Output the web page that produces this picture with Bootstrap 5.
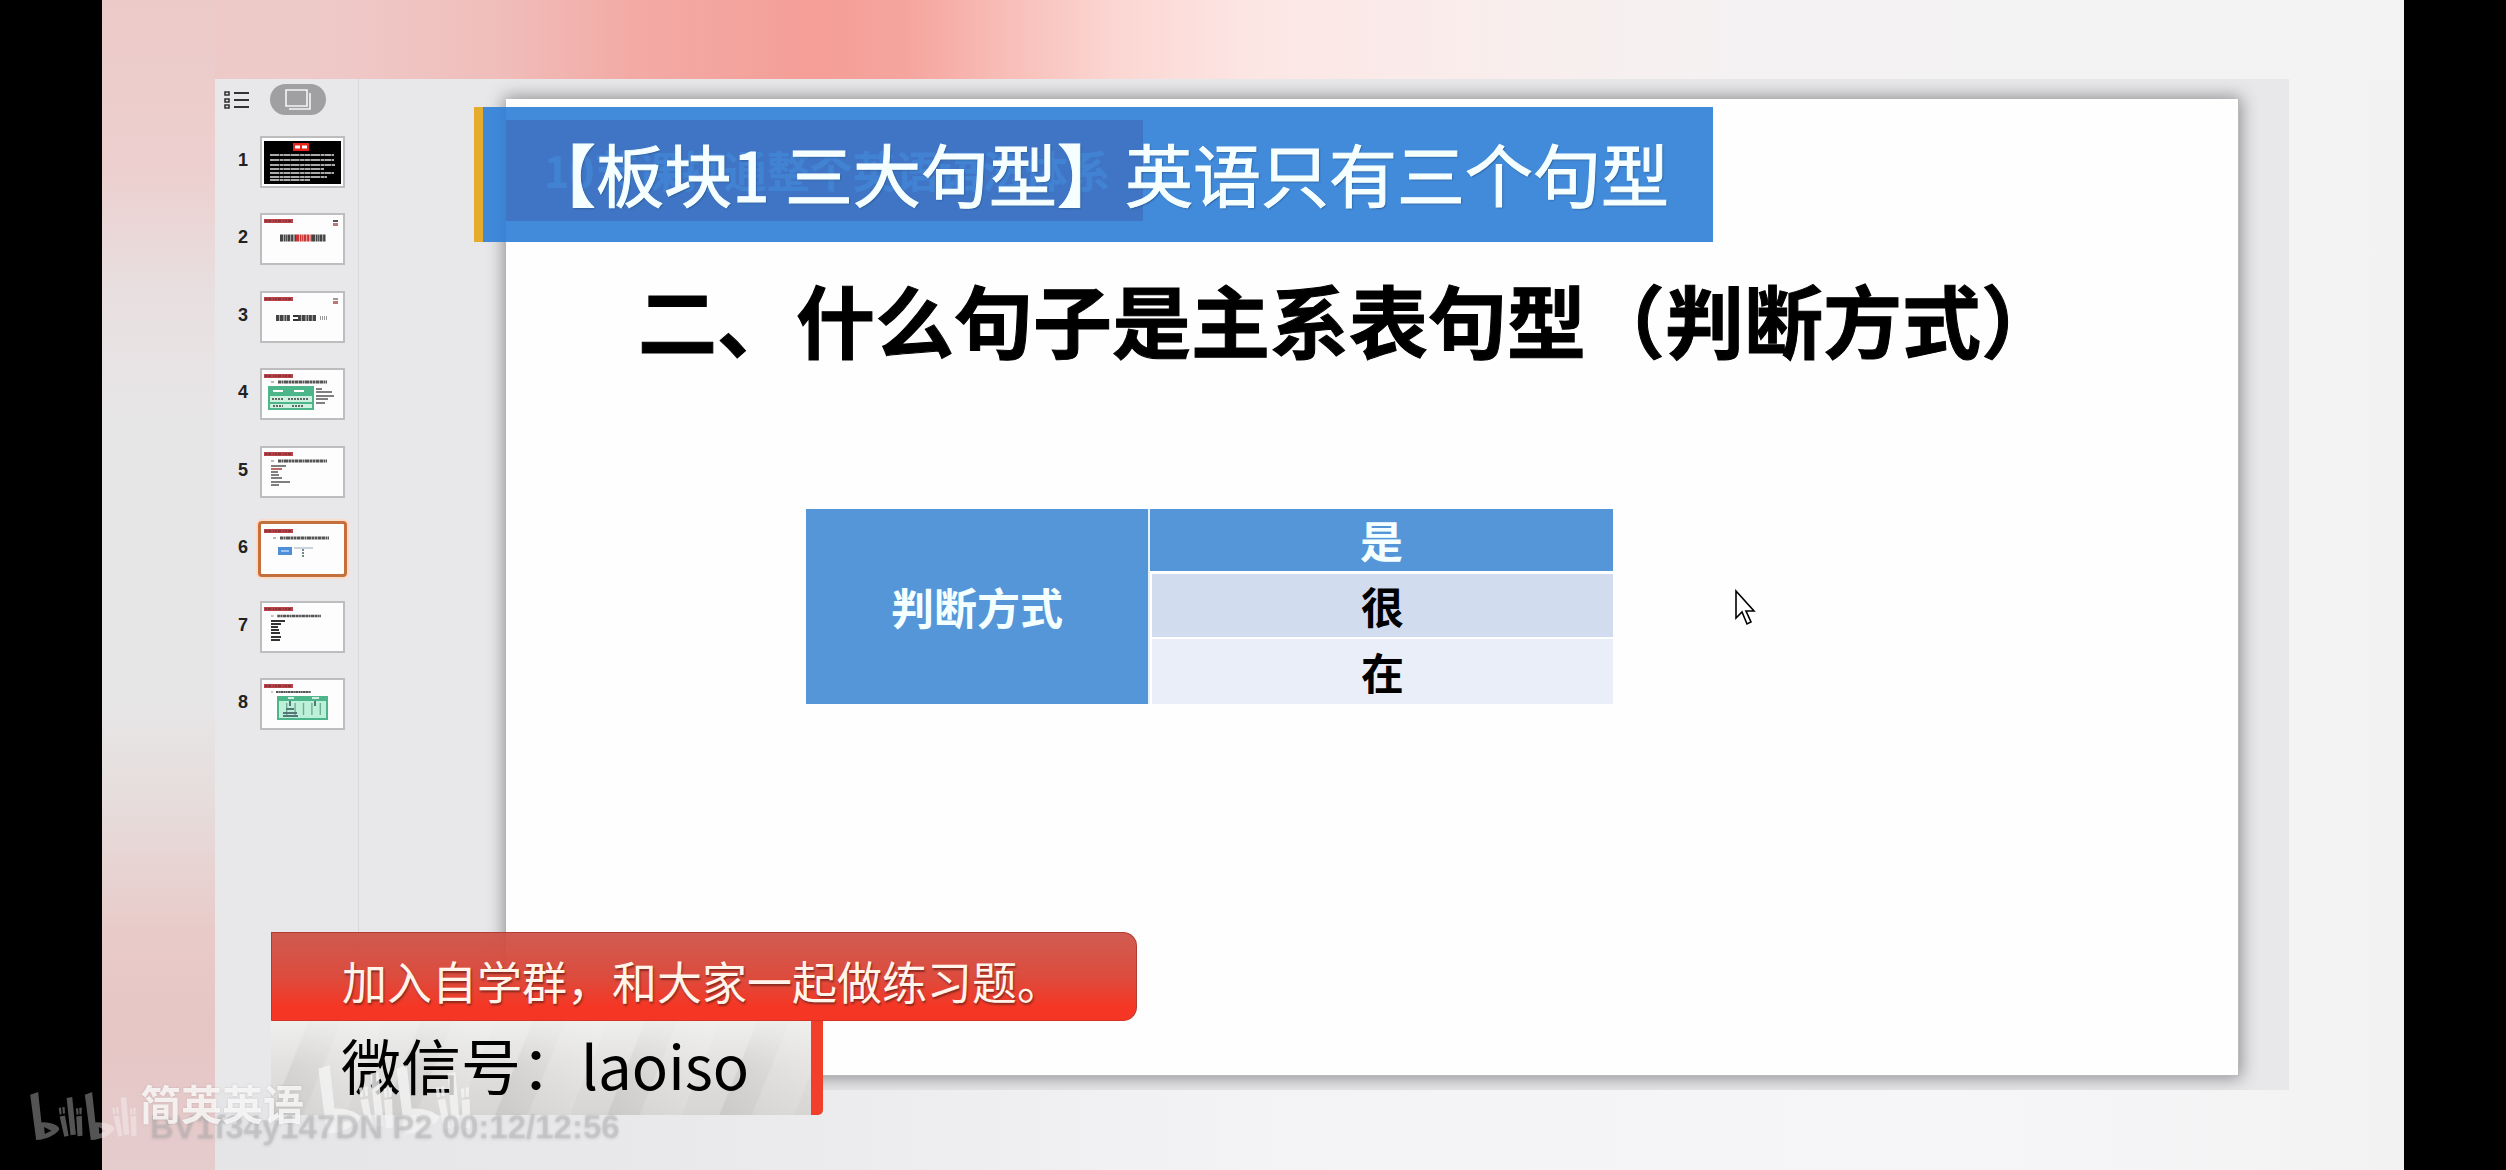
<!DOCTYPE html>
<html lang="zh-CN">
<head>
<meta charset="utf-8">
<meta name="viewport" content="width=device-width, initial-scale=1">
<title>英语只有三个句型</title>
<link rel="stylesheet" href="https://cdn.jsdelivr.net/npm/bootstrap@5.3.0/dist/css/bootstrap.min.css">
<style>
body{background:#000;font-family:"Noto Sans CJK SC","Noto Sans",sans-serif;color:#000}
.stage{margin:0 102px;min-height:100vh;padding:79px 115px 80px 113px;
 background:
 linear-gradient(180deg,#eccac8 0,#ecd0cf 15%,#e8dfe0 25%,#e7e6e7 36%,#e7e6e7 60%,#e6dcdb 69%,#e8cac8 80%,#e6c6c5 88%,#e5cccd 100%) left top/113px 100% no-repeat,
 linear-gradient(90deg,#eccac8 0,#eec9c8 10%,#f0bebb 17%,#f3aaa5 23%,#f49e97 31%,#f5a59e 35%,#f8bcb6 39%,#fbd6d2 44%,#fce6e4 50%,#f9edec 60%,#f4f2f3 72%,#f3f3f3 100%) left top/100% 79px no-repeat,
 linear-gradient(90deg,#e4e4e7 0,#e9e9eb 25%,#f3f3f5 50%,#f6f6f9 80%,#f2f2f2 100%)}
.editor{background:#e8e8ea}
.side{width:144px;border-right:1px solid #d9d9db;padding:5px 13px 0 8px}
.pill{width:56px;height:31px;border:0;border-radius:16px;background:#a09fa2;padding:0}
.plain{border:0;background:none;padding:0}
.tabs-row{gap:20px;margin-bottom:21px}
.thumbs{height:594px;margin:0}
.thumb{height:52px;border:0;background:none;padding:0;color:#222;font:bold 18px/48px "Liberation Sans",sans-serif}
.thumb span{height:52px}
.thumb svg{background:#fdfdfd;outline:2px solid #bdbcbe;outline-offset:-2px;width:85px;height:52px}
.thumb.now svg{outline:3px solid #c4703c;outline-offset:-1px;border-radius:2px;box-shadow:0 0 0 4px #fbdccb}
.canvas-area{padding:20px 50px 14px 147px;overflow:hidden}
.slide{background:#fefefe;box-shadow:0 0 16px 2px #8d8c90;border-right:1px solid #b9b9b9;border-bottom:1px solid #b9b9b9;padding-top:21px}
.strip{background:#e61e1e;color:rgba(255,255,255,.6);width:637px;height:101px;padding-left:38px;font-size:43px;line-height:99px;font-weight:700;white-space:nowrap}
.slide h1{font-size:79px;line-height:100px;font-weight:700;margin:48px 0 140px 132px;white-space:nowrap;-webkit-text-stroke:1px #000}
.judge{width:807px;margin-left:300px;font-size:43px;line-height:58px;font-weight:700;text-align:center;border-collapse:separate;border-spacing:0}
.judge th,.judge td{padding:0 0 2px;height:65px;vertical-align:middle}
.judge th{background:#5596d9;color:#f4ffff}
.judge .kind{width:344px;border-right:2px solid #e6f2fb}
.judge .first{border-bottom:3px solid #fff}
.judge .mid{background:#d2dcef;border-bottom:2px solid #fff;border-left:2px solid #fff}
.judge .low{background:#eaeef8;border-left:2px solid #fff}
.banner{left:372px;top:107px;height:135px;width:1239px;border-left:9px solid #e5ab2c;background:rgba(46,126,215,.9);color:#f6ffff;font-size:68px;line-height:132px;padding-left:45px;white-space:nowrap;text-shadow:1px 1px 2px #26588f;-webkit-text-stroke:1px #f6ffff}
.lower{left:169px;bottom:55px}
.invite{width:866px;height:89px;padding-left:70px;border-radius:0 14px 14px 0;border:1px solid #b23c31;border-bottom-color:#d53424;background:linear-gradient(180deg,rgba(205,78,66,.92),#dc4c3e 50%,#f63624 85%);color:#fff3ea;font-size:45px;line-height:95px;white-space:nowrap;text-shadow:1px 2px 2px #8a2a20}
.contact{width:552px;height:94px;padding-left:70px;border-right:12px solid #f23f2c;border-bottom-right-radius:5px;font-size:60px;line-height:86px;white-space:nowrap;
 background:linear-gradient(180deg,rgba(240,240,238,.9),rgba(220,219,218,.5) 50%,rgba(198,197,196,.5)),repeating-linear-gradient(112deg,#e6e5e4 0,#e6e5e4 34px,#cfcecc 36px,#d9d8d6 64px,#e6e5e4 66px,#efeeed 104px)}
.cursor{left:1632px;top:589px}
.mark-logo{left:30px;bottom:29px;fill:#fff;opacity:.33}
.mark-big{left:318px;bottom:35px;fill:#f4f4f4;opacity:.8}
.mark-name{left:140px;bottom:38px;font-size:41px;line-height:60px;font-weight:700;color:rgba(255,255,255,.82);text-shadow:0 0 2px rgba(120,110,110,.35)}
.mark-time{left:150px;bottom:23px;font:bold 33px/40px "Liberation Sans",sans-serif;color:rgba(170,170,173,.3);text-shadow:0 1px 3px rgba(140,140,140,.3);white-space:nowrap}
</style>
<script src="https://cdn.jsdelivr.net/npm/bootstrap@5.3.0/dist/js/bootstrap.bundle.min.js"></script>
</head>
<body>
<svg width="0" height="0" class="position-absolute" aria-hidden="true">
 <defs>
 <symbol id="bili" viewBox="0 0 322 148">
  <path fill-rule="evenodd" d="M0 8 24 0 34 92C56 90 88 100 88 112 84 126 46 146 18 145ZM42 106 44 127 64 117Z"/>
  <path d="M86 48l7-1 2 20-6 1zM97 46l7-1 1 20-6 1zM89 74l16-3 11 61-13 3zM110 18l17-3 11 113-16 3zM138 50l7-1 1 19-6 1zM148 48l8-1-1 20-6 1zM139 74l17-2 2 60-15 2z"/>
  <path fill-rule="evenodd" d="M165 8 187 0 197 92C220 90 254 100 255 112 250 126 212 146 183 145ZM207 106 209 127 229 117Z"/>
  <path d="M248 48l7-1 2 20-6 1zM259 46l7-1 1 20-6 1zM252 74l16-3 11 61-13 3zM273 18l17-3 9 113-16 3zM301 50l7-1 1 19-6 1zM311 48l8-1-1 20-6 1zM303 74l17-2 1 60-15 2z"/>
 </symbol>
 <symbol id="ribbon" viewBox="0 0 29 4"><path fill="#b94348" d="M0 0h29v4H0z"/><path stroke="#5c2528" stroke-dasharray="2 1 3 2 1 1" d="M1 2h27"/></symbol>
 <symbol id="heading" viewBox="0 0 56 4"><path stroke="#777" stroke-width="1" d="M0 2h3"/><path stroke="#555" stroke-width="3" stroke-dasharray="3 .5 2 .5 4 .5" d="M7 2h49"/></symbol>
 </defs>
</svg>

<main class="stage position-relative d-flex">
 <div class="editor d-flex flex-grow-1">
  <nav class="side flex-shrink-0" aria-label="幻灯片">
   <div class="tabs-row d-flex align-items-center">
    <button class="plain d-flex" aria-label="大纲"><svg width="27" height="20" fill="none" stroke="#333" stroke-width="2"><path d="M2 2h4v3H2zM2 9h4v3H2zM2 15h4v3H2z" stroke-width="1.6"/><path d="M11 3h15M11 10h15M11 17h15"/></svg></button>
    <button class="pill d-flex justify-content-center align-items-center" aria-label="缩略图"><svg width="28" height="26" viewBox="0 0 28 26" fill="none" stroke="#f5f5f5" stroke-width="1.6"><path d="M2 3h21v16H2zM26 6v16H5"/></svg></button>
   </div>
   <ol class="thumbs list-unstyled d-flex flex-column justify-content-between">
    <li><button class="thumb d-flex w-100 justify-content-end align-items-center gap-2"><span class="pe-1">1</span><svg viewBox="0 0 85 52"><path d="M4 5h77v43H4z"/><path fill="#e8231b" d="M33 7h16v8H33z"/><path stroke="#fff" stroke-width="3" stroke-dasharray="5 2" d="M35 11h12"/><g stroke="#aaa" stroke-width="2" stroke-dasharray="9 .6 4 .4 6 .5"><path d="M10 19h64M10 24h64M10 29h65M10 33h54M10 37h64M10 41h57M10 44h40" /></g></svg></button></li>
    <li><button class="thumb d-flex w-100 justify-content-end align-items-center gap-2"><span class="pe-1">2</span><svg viewBox="0 0 85 52"><use href="#ribbon" x="4" y="6" width="29" height="4"/><path fill="#555" d="M73 7h5v2h-5z"/><path fill="#b77" d="M73 10h5v3h-5z"/><g stroke-width="7" stroke-dasharray="3 .6 2 .5 1 .4"><path stroke="#444" d="M20 25h16M52 25h14"/><path stroke="#c33" d="M36 25h16"/></g></svg></button></li>
    <li><button class="thumb d-flex w-100 justify-content-end align-items-center gap-2"><span class="pe-1">3</span><svg viewBox="0 0 85 52"><use href="#ribbon" x="4" y="6" width="29" height="4"/><path fill="#999" d="M73 7h5v2h-5z"/><path fill="#b77" d="M73 10h5v3h-5z"/><path stroke="#444" stroke-width="6" stroke-dasharray="3 .6 4 .8 2 .5" d="M16 27h14M38 27h18"/><path stroke="#333" stroke-width="2" d="M33 25h5M33 29h5"/><path stroke="#999" stroke-width="4" stroke-dasharray="1 1" d="M60 27h8"/></svg></button></li>
    <li><button class="thumb d-flex w-100 justify-content-end align-items-center gap-2"><span class="pe-1">4</span><svg viewBox="0 0 85 52"><use href="#ribbon" x="4" y="6" width="29" height="4"/><use href="#heading" x="11" y="12" width="56" height="4"/><path fill="#4db58a" d="M8 18h46v24H8z"/><path fill="#cdf3e0" d="M10 28h42v6H10zM10 36h42v4H10z"/><path stroke="#fff" stroke-width="2" d="M13 23h10M34 23h10"/><path stroke="#666" stroke-width="2" stroke-dasharray="2 1" d="M12 31h12M28 31h20M13 38h10M32 38h12"/><path stroke="#555" stroke-width="1.4" d="M56 21h6M56 24h16M56 28h18M56 31h12M56 35h9"/></svg></button></li>
    <li><button class="thumb d-flex w-100 justify-content-end align-items-center gap-2"><span class="pe-1">5</span><svg viewBox="0 0 85 52"><use href="#ribbon" x="4" y="6" width="29" height="4"/><use href="#heading" x="11" y="13" width="56" height="4"/><path stroke="#555" stroke-width="1.6" d="M11 20h15M11 26h7M11 29h8M11 32h11M11 36h19M11 39h8"/><path stroke="#a44" stroke-width="1.6" d="M11 23h11"/></svg></button></li>
    <li><button class="thumb now d-flex w-100 justify-content-end align-items-center gap-2" aria-current="true"><span class="pe-1">6</span><svg viewBox="0 0 85 52"><use href="#ribbon" x="4" y="6" width="29" height="4"/><use href="#heading" x="11" y="13" width="60" height="4"/><path fill="#4f8fd8" d="M18 24h14v8H18z"/><path stroke="#9cc4f0" stroke-width="2" d="M21 28h8"/><path stroke="#9ab" d="M34 25h19"/><path stroke="#788" stroke-width="2" stroke-dasharray="2 1" d="M43 26v8"/></svg></button></li>
    <li><button class="thumb d-flex w-100 justify-content-end align-items-center gap-2"><span class="pe-1">7</span><svg viewBox="0 0 85 52"><use href="#ribbon" x="4" y="6" width="29" height="4"/><use href="#heading" x="11" y="13" width="50" height="4"/><path stroke="#333" stroke-width="1.8" d="M11 20h14M11 23h10M11 26h7M11 29h8M11 32h9M11 36h10M11 39h9"/></svg></button></li>
    <li><button class="thumb d-flex w-100 justify-content-end align-items-center gap-2"><span class="pe-1">8</span><svg viewBox="0 0 85 52"><use href="#ribbon" x="4" y="6" width="29" height="4"/><use href="#heading" x="11" y="12" width="40" height="4"/><path fill="#4db58a" d="M17 18h51v24H17z"/><path fill="#bdf0d8" d="M19 23h47v17H19z"/><path stroke="#fff" stroke-width="1.6" d="M28 20h6M52 20h7"/><path stroke="#6fae96" stroke-width="12" stroke-dasharray="1.4 7" d="M26 31h38"/><path stroke="#577" stroke-width="2" d="M26 31h8M23 35h14M23 38h15M30 23v5M55 23v5"/></svg></button></li>
   </ol>
  </nav>
  <div class="canvas-area d-flex flex-grow-1">
   <article class="slide flex-grow-1">
    <div class="strip">10节课打通整个英语语法体系</div>
    <h1>二、什么句子是主系表句型（判断方式）</h1>
    <table class="judge">
     <tr><th class="kind" rowspan="3" scope="rowgroup">判断方式</th><th class="first">是</th></tr>
     <tr><td class="mid">很</td></tr>
     <tr><td class="low">在</td></tr>
    </table>
   </article>
  </div>
 </div>

 <div class="banner position-absolute">【板块1 三大句型】英语只有三个句型</div>
 <svg class="cursor position-absolute" width="22" height="38" viewBox="0 0 22 38"><path fill="#fff" stroke="#000" stroke-width="1.6" d="M2 2v27l6-6 5 12 4-2-5-11h8z"/></svg>
 <div class="lower position-absolute">
  <div class="invite">加入自学群，和大家一起做练习题。</div>
  <div class="contact">微信号：laoiso</div>
 </div>
</main>

<svg class="mark-big position-fixed" width="153" height="70" aria-hidden="true"><use href="#bili"/></svg>
<div class="mark-time position-fixed">BV1f34y147DN P2 00:12/12:56</div>
<svg class="mark-logo position-fixed" width="107" height="49" aria-label="bilibili"><use href="#bili"/></svg>
<div class="mark-name position-fixed">简英英语</div>
</body>
</html>
